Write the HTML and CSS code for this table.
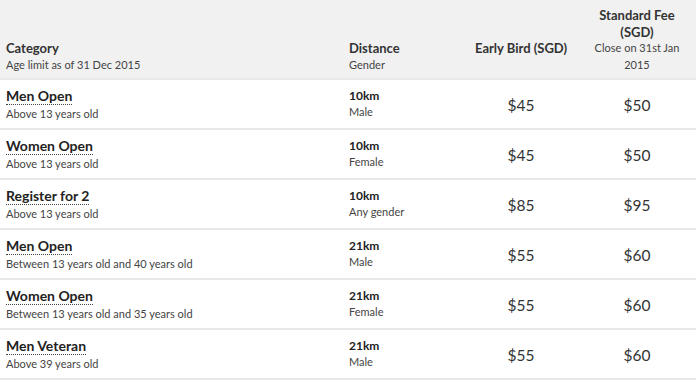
FILE: index.html
```html
<!DOCTYPE html>
<html lang="en">
<head>
    <meta charset="UTF-8">
    <meta name="viewport" content="width=device-width, initial-scale=1.0">
    <title>Race Categories</title>
    <link rel="stylesheet" href="styles.css">
</head>
<body>
    <div class="fees">
        <div class="row head">
            <div class="cell">
                <strong>Category</strong>
                <span>Age limit as of 31 Dec 2015</span>
            </div>
            <div class="cell">
                <strong>Distance</strong>
                <span>Gender</span>
            </div>
            <div class="cell center early">
                <strong>Early Bird (SGD)</strong>
                <span>&nbsp;</span>
            </div>
            <div class="cell center fee">
                <strong>Standard Fee (SGD)</strong>
                <span>Close on 31st Jan 2015</span>
            </div>
        </div>

        <div class="row">
            <div class="cell"><b class="name">Men Open</b><span>Above 13 years old</span></div>
            <div class="cell"><b>10km</b><span>Male</span></div>
            <div class="cell center price early">$45</div>
            <div class="cell center price fee">$50</div>
        </div>
        <div class="row">
            <div class="cell"><b class="name">Women Open</b><span>Above 13 years old</span></div>
            <div class="cell"><b>10km</b><span>Female</span></div>
            <div class="cell center price early">$45</div>
            <div class="cell center price fee">$50</div>
        </div>
        <div class="row">
            <div class="cell"><b class="name">Register for 2</b><span>Above 13 years old</span></div>
            <div class="cell"><b>10km</b><span>Any gender</span></div>
            <div class="cell center price early">$85</div>
            <div class="cell center price fee">$95</div>
        </div>
        <div class="row">
            <div class="cell"><b class="name">Men Open</b><span>Between 13 years old and 40 years old</span></div>
            <div class="cell"><b>21km</b><span>Male</span></div>
            <div class="cell center price early">$55</div>
            <div class="cell center price fee">$60</div>
        </div>
        <div class="row">
            <div class="cell"><b class="name">Women Open</b><span>Between 13 years old and 35 years old</span></div>
            <div class="cell"><b>21km</b><span>Female</span></div>
            <div class="cell center price early">$55</div>
            <div class="cell center price fee">$60</div>
        </div>
        <div class="row">
            <div class="cell"><b class="name">Men Veteran</b><span>Above 39 years old</span></div>
            <div class="cell"><b>21km</b><span>Male</span></div>
            <div class="cell center price early">$55</div>
            <div class="cell center price fee">$60</div>
        </div>
    </div>
</body>
</html>
```

FILE: styles.css
```css
body {
    margin: 0;
    font-family: 'Lato', 'Liberation Sans', sans-serif;
    color: #444;
    background: #fff;
}

.fees {
    width: 696px;
}

.row {
    display: grid;
    grid-template-columns: 343px 127px 102px 1fr;
    height: 48px;
    border-bottom: 2px solid #e8e8e8;
}

.row.head {
    height: 78px;
    background-color: #f1f1f1;
}

.cell {
    display: flex;
    flex-direction: column;
    justify-content: center;
    padding: 0 6px;
    font-size: 11px;
    line-height: 16px;
}

.head .cell {
    justify-content: flex-end;
    padding-bottom: 5px;
    line-height: 16.5px;
}

.head strong {
    color: #333;
    font-weight: 700;
    font-size: 13px;
}

.center {
    align-items: center;
    text-align: center;
}

.early {
    padding: 0;
    white-space: nowrap;
}

.head .early {
    padding-bottom: 5px;
}

.fee {
    padding: 0 10px 0 16px;
}

.head .fee {
    padding-right: 10px;
}

.cell b {
    color: #222;
    font-weight: 700;
    font-size: 12px;
}

.cell b.name {
    align-self: flex-start;
    font-size: 14px;
    line-height: 17px;
    border-bottom: 1px dotted #444;
    margin-bottom: 1px;
}

.price {
    font-size: 15.5px;
    color: #333;
    padding-top: 2px;
}
```
